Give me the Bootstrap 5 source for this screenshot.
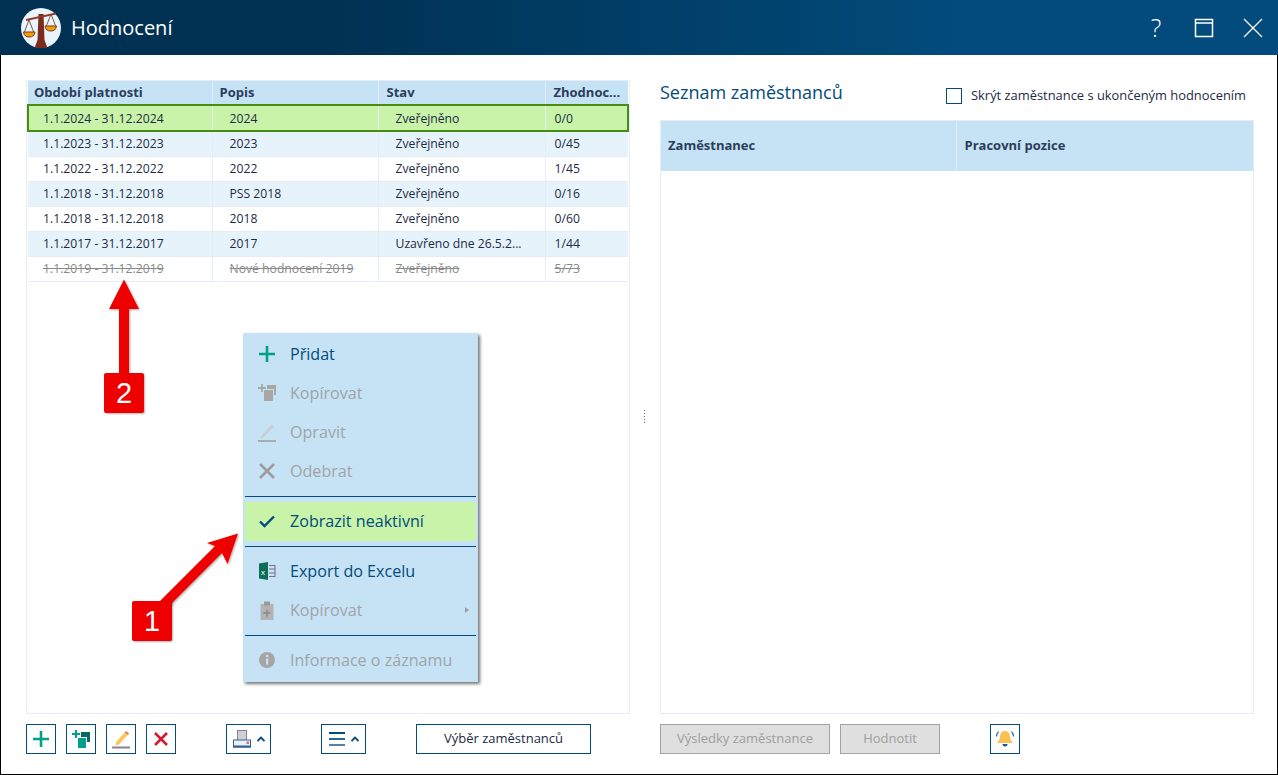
<!DOCTYPE html>
<html lang="cs">
<head>
<meta charset="utf-8">
<title>Hodnocení</title>
<link href="https://cdn.jsdelivr.net/npm/bootstrap@5.3.0/dist/css/bootstrap.min.css" rel="stylesheet">
<style>
html,body{margin:0;height:775px;overflow:hidden;background:#fff}
body{font-family:"Open Sans","Liberation Sans",sans-serif;font-size:12px;color:#1d2b45}
.appwin{width:1278px;height:775px;position:relative;border-bottom:1px solid #000}
.titlebar{height:55px;background:linear-gradient(90deg,#003152 0%,#003152 25%,#024b7c 75%,#024b7c 100%);color:#fff}
.titlebar .apptitle{font-size:20px;margin-left:10px;line-height:55px}
.logo{margin-left:21px;display:block}
.winbtns{margin-right:15px;gap:28px}
.helpmark{font-size:25px;line-height:1;width:20px;text-align:center;font-weight:300}
.sqgap{margin-right:1px}
.mainarea{height:719px;border-left:1px solid #000;border-right:1px solid #000;padding:25px 23px 0 25px}
.leftpane{width:604px}
.gutter{width:30px;position:relative}
.rightpane{width:594px}
.gripdots{position:absolute;left:14px;top:330px;width:1px;height:15px;background:repeating-linear-gradient(#667 0 1px,transparent 1px 3px)}
.gridbox{border:1px solid #e6ecf7;height:634px;background:#fff}
.rightpane .gridbox{height:594px}
.gridtbl{width:100%;table-layout:fixed;margin:0;border-collapse:collapse;font-size:12.2px}
.gridtbl th{background:#c6e3f5;color:#2c3d5c;font-size:13px;font-weight:700;height:24px;padding:0 0 0 6px;border:0;border-right:1px solid #e6ecf7;line-height:1;vertical-align:middle;white-space:nowrap;overflow:hidden;text-overflow:ellipsis}
.gridtbl th:nth-child(2){padding-left:7px}
.gridtbl th:nth-child(n+3){padding-left:8px}
.gridtbl th:last-child{border-right:0}
.gridtbl td{height:25px;padding:1px 0 0 17px;border:0;border-right:1px solid #e6ecf7;border-bottom:1px solid #e6ecf7;color:#1d2b45;background:#fff;vertical-align:middle;line-height:1;white-space:nowrap;overflow:hidden;text-overflow:ellipsis}
.gridtbl td:first-child{padding-left:15px}
.gridtbl td:last-child{border-right:0;padding-left:9px}
.gridtbl tr.altrow td{background:#e6f3fb}
.gridtbl tr.selrow td{background:#c8f3a8;height:26px;padding-top:2px;border-top:2px solid #478c12;border-bottom:2px solid #478c12;border-right:1px solid #e6ecf7}
.gridtbl tr.selrow td:first-child{border-left:2px solid #478c12;padding-left:14px}
.gridtbl tr.selrow td:last-child{border-right:2px solid #478c12}
.gridtbl tr.offrow td{color:#8a8a8a;text-decoration:line-through}
.gridtbl.emptab th{height:50px;padding:0 0 1px 7px}
.gridtbl.emptab th:nth-child(2){padding-left:8px}
.toolrow{margin-top:10px;height:30px}
.tbtn{height:30px;width:30px;padding:0;border:1px solid #024b7c;border-radius:0;background:#fff;display:flex;align-items:center;justify-content:center;font-size:13px;color:#1d2b45;flex:none}
.tbtn.wide{width:45px;gap:5px}
.tbtn.textbtn{width:175px}
.tbtn.offbtn{background:#dfdfdf;border-color:#a3a3a3;color:#9e9e9e}
.nextbtn{margin-left:10px}
.farbtn{margin-left:50px}
.seznam{font-size:18px;color:#024b7c;line-height:24px;margin:0}
.righthead{height:40px;padding-top:0}
.chkwrap{font-size:12.9px;color:#1d2b45;gap:9px;margin-right:8px;margin-top:6px}
.chkbox{width:16px;height:16px;border:1px solid #024b7c;display:block;background:#fff}
.ctxmenu{position:absolute;left:243px;top:333px;width:235px;height:349px;padding:2px;margin:0;background:#c6e3f5;border:0;border-radius:0;box-shadow:2px 2px 3px rgba(0,0,0,.55);display:block;font-size:16.1px;z-index:5}
.ctxmenu .dropdown-item{height:39px;padding:0 0 1px 45px;color:#024b7c;display:flex;align-items:center;position:relative;line-height:1;background:transparent}
.ctxmenu .dropdown-item.disabled{color:#a0a4a8}
.ctxmenu .dropdown-item.onitem{background:#c8f3a8;margin-top:0}
.ctxmenu hr.dropdown-divider{margin:5px 0 5px 0;border-top:1px solid #024b7c;opacity:1;height:0}
.ctxmenu .mico{position:absolute;left:11px;top:8px;width:22px;height:22px}
.subcaret{position:absolute;right:7px;top:16px;width:0;height:0;border-left:4px solid #9a9ea2;border-top:3.5px solid transparent;border-bottom:3.5px solid transparent}
.annot{position:absolute;left:0;top:0;z-index:6;pointer-events:none}
.numtag{position:absolute;width:40px;height:40px;background:#ef0000;border-radius:2px;color:#fff;font-size:29px;line-height:40px;text-align:center;z-index:7;box-shadow:1px 1px 2px rgba(0,0,0,.3);font-family:"Liberation Sans",sans-serif}
.tag-a{left:132px;top:601px}
.tag-b{left:104px;top:373px}
</style>
</head>
<body>
<div class="appwin">
  <div class="titlebar d-flex align-items-center">
    <svg class="logo" width="40" height="40" viewBox="0 0 40 40">
      <circle cx="20" cy="20" r="20" fill="#e9f4fb"/>
      <path d="M17.5 6h5l1 26 3 8h-13l3-8z" fill="#7b2c1e"/>
      <path d="M5 11 L35 4.5 L35 6.5 L5 13z" fill="#8f3a2a"/>
      <path d="M8 12 L3 25 M8 12 L13 25 M30 6 L25 19 M30 6 L35 19" stroke="#7b4a30" stroke-width=".9" fill="none"/>
      <path d="M2.500 24h11.500a5.800 5.800 0 0 1-11.500 0z" fill="#f39a06" stroke="#7b3a20"/>
      <path d="M24 18h11.500a5.800 5.800 0 0 1-11.500 0z" fill="#f39a06" stroke="#7b3a20"/>
    </svg>
    <span class="apptitle">Hodnocení</span>
    <div class="winbtns ms-auto d-flex align-items-center">
      <span class="helpmark">?</span>
      <svg class="sqgap" width="20" height="20" viewBox="0 0 20 20" fill="none" stroke="#fff" stroke-width="1.500"><rect x="1.500" y="1.500" width="17" height="17"/><path d="M1.500 5h17"/></svg>
      <svg width="20" height="20" viewBox="0 0 20 20" fill="none" stroke="#fff" stroke-width="1.200"><path d="M1 1l18 18M19 1L1 19"/></svg>
    </div>
  </div>
  <div class="mainarea d-flex">
    <div class="leftpane">
      <div class="gridbox">
        <table class="table gridtbl">
          <colgroup><col style="width:184px"><col style="width:166px"><col style="width:167px"><col></colgroup>
          <thead><tr><th>Období platnosti</th><th>Popis</th><th>Stav</th><th>Zhodnoc...</th></tr></thead>
          <tbody>
            <tr class="selrow"><td>1.1.2024 - 31.12.2024</td><td>2024</td><td>Zveřejněno</td><td>0/0</td></tr>
            <tr class="altrow"><td>1.1.2023 - 31.12.2023</td><td>2023</td><td>Zveřejněno</td><td>0/45</td></tr>
            <tr><td>1.1.2022 - 31.12.2022</td><td>2022</td><td>Zveřejněno</td><td>1/45</td></tr>
            <tr class="altrow"><td>1.1.2018 - 31.12.2018</td><td>PSS 2018</td><td>Zveřejněno</td><td>0/16</td></tr>
            <tr><td>1.1.2018 - 31.12.2018</td><td>2018</td><td>Zveřejněno</td><td>0/60</td></tr>
            <tr class="altrow"><td>1.1.2017 - 31.12.2017</td><td>2017</td><td>Uzavřeno dne 26.5.2...</td><td>1/44</td></tr>
            <tr class="offrow"><td>1.1.2019 - 31.12.2019</td><td>Nové hodnocení 2019</td><td>Zveřejněno</td><td>5/73</td></tr>
          </tbody>
        </table>
      </div>
      <div class="toolrow d-flex">
        <button class="tbtn" type="button" aria-label="Přidat"><svg width="18" height="18" viewBox="0 0 18 18"><path d="M9 1v16M1 9h16" stroke="#00a08a" stroke-width="2.600"/></svg></button>
        <button class="tbtn nextbtn" type="button" aria-label="Kopírovat"><svg width="20" height="20" viewBox="0 0 20 20"><rect x="10" y="3" width="9" height="10" fill="#05695e"/><rect x="6.500" y="8.500" width="9" height="11" fill="#00a08a" stroke="#fff"/><path d="M5 1v8M1 5h8" stroke="#00a08a" stroke-width="2"/></svg></button>
        <button class="tbtn nextbtn" type="button" aria-label="Opravit"><svg width="20" height="20" viewBox="0 0 20 20"><path d="M5 13L14.500 2.500l3 2.500L8 15.500l-3.200 1z" fill="#f8c860"/><path d="M15 2l3 2.500-1 1.200-3-2.500z" fill="#e06a6a"/><path d="M1 18.500h18" stroke="#8b7f94" stroke-width="2"/></svg></button>
        <button class="tbtn nextbtn" type="button" aria-label="Odebrat"><svg width="18" height="18" viewBox="0 0 18 18"><path d="M3 3l12 12M15 3L3 15" stroke="#cf1f2f" stroke-width="2.600"/></svg></button>
        <button class="tbtn wide farbtn" type="button" aria-label="Tisk"><svg width="20" height="20" viewBox="0 0 20 20"><rect x="5.500" y="1.500" width="9" height="10" fill="#cfcfd8" stroke="#8b7f94"/><rect x="1.500" y="11" width="17" height="7" fill="#e9f1f8" stroke="#2f6293"/><path d="M1 17.500h18" stroke="#2f6293" stroke-width="2"/><rect x="14.500" y="12.500" width="2.500" height="2.500" fill="#e06a7a"/></svg><svg width="8" height="6" viewBox="0 0 8 6"><path d="M.5 5L4 1.500 7.500 5" fill="none" stroke="#024b7c" stroke-width="1.800"/></svg></button>
        <button class="tbtn wide farbtn" type="button" aria-label="Menu"><svg width="17" height="14" viewBox="0 0 17 14"><path d="M0 1h16" stroke="#024b7c" stroke-width="2"/><path d="M0 7h16" stroke="#24689a" stroke-width="2"/><path d="M0 13h16" stroke="#4f84a8" stroke-width="2"/></svg><svg width="8" height="6" viewBox="0 0 8 6"><path d="M.5 5L4 1.500 7.500 5" fill="none" stroke="#024b7c" stroke-width="1.800"/></svg></button>
        <button class="tbtn textbtn farbtn" type="button">Výběr zaměstnanců</button>
      </div>
    </div>
    <div class="gutter"><span class="gripdots"></span></div>
    <div class="rightpane">
      <div class="righthead d-flex justify-content-between align-items-start">
        <h2 class="seznam fw-normal">Seznam zaměstnanců</h2>
        <label class="chkwrap d-flex align-items-center"><span class="chkbox"></span>Skrýt zaměstnance s ukončeným hodnocením</label>
      </div>
      <div class="gridbox">
        <table class="table gridtbl emptab">
          <colgroup><col style="width:295px"><col></colgroup>
          <thead><tr><th>Zaměstnanec</th><th>Pracovní pozice</th></tr></thead>
        </table>
      </div>
      <div class="toolrow d-flex">
        <button class="tbtn offbtn" style="width:170px" type="button">Výsledky zaměstnance</button>
        <button class="tbtn offbtn nextbtn" style="width:100px" type="button">Hodnotit</button>
        <button class="tbtn farbtn" type="button" aria-label="Upozornění"><svg width="20" height="20" viewBox="0 0 20 20"><path d="M10 2c3.800 0 4.800 3 5 6 .2 2.700 1.500 4.200 3 6H2c1.500-1.800 2.800-3.300 3-6 .2-3 1.200-6 5-6z" fill="#fbc04f"/><path d="M7.500 15h5a2.500 2.500 0 0 1-5 0z" fill="#1c5a86"/><path d="M1.500 7.500c0-2 .8-3.500 2-4.800M18.500 7.500c0-2-.8-3.500-2-4.800" stroke="#24689a" stroke-width="1.200" fill="none"/></svg></button>
      </div>
    </div>
  </div>

  <ul class="dropdown-menu ctxmenu list-unstyled">
    <li><a class="dropdown-item" href="#"><svg class="mico" viewBox="0 0 22 22"><path d="M11 3v16M3 11h16" stroke="#00a08a" stroke-width="2.600"/></svg>Přidat</a></li>
    <li><a class="dropdown-item disabled" href="#"><svg class="mico" viewBox="0 0 22 22"><rect x="11" y="3" width="9" height="10" fill="#a6a6a6"/><rect x="7.500" y="7.500" width="10" height="12" fill="#a6a6a6" stroke="#c6e3f5"/><path d="M6 2v8M2 6h8" stroke="#a6a6a6" stroke-width="1.800"/></svg>Kopírovat</a></li>
    <li><a class="dropdown-item disabled" href="#"><svg class="mico" viewBox="0 0 22 22"><path d="M5 15L16 3.500l2 2L7 17l-2.500.6z" fill="#c9cdd0"/><path d="M2 20h18" stroke="#a6a6a6" stroke-width="1.800"/></svg>Opravit</a></li>
    <li><a class="dropdown-item disabled" href="#"><svg class="mico" viewBox="0 0 22 22"><path d="M4 4l14 14M18 4L4 18" stroke="#9c9c9c" stroke-width="2.600"/></svg>Odebrat</a></li>
    <li><hr class="dropdown-divider"></li>
    <li><a class="dropdown-item onitem" href="#"><svg class="mico" viewBox="0 0 22 22"><path d="M4 11.500l4.500 4.500L18 6.500" fill="none" stroke="#024b7c" stroke-width="2.400"/></svg>Zobrazit neaktivní</a></li>
    <li><hr class="dropdown-divider"></li>
    <li><a class="dropdown-item" href="#"><svg class="mico" viewBox="0 0 22 22"><path d="M3 3.500L12 2v18l-9-1.500z" fill="#0d6e57"/><text x="5" y="14.500" font-size="8" fill="#fff" font-family="Liberation Sans">x</text><path d="M13 5.500h6v11h-6M13 9h6M13 13h6" fill="none" stroke="#7f6f88" stroke-width="1.100"/></svg>Export do Excelu</a></li>
    <li><a class="dropdown-item disabled" href="#"><svg class="mico" viewBox="0 0 22 22"><rect x="4.500" y="5" width="13" height="16" fill="#b3b3b3"/><rect x="8" y="2.500" width="6" height="4" fill="#999"/><path d="M11 10.500v7M7.500 14h7" stroke="#8a8a8a" stroke-width="1.600"/></svg>Kopírovat<span class="subcaret"></span></a></li>
    <li><hr class="dropdown-divider"></li>
    <li><a class="dropdown-item disabled" href="#"><svg class="mico" viewBox="0 0 22 22"><circle cx="11" cy="11" r="8" fill="#a6a6a6"/><rect x="10" y="9.500" width="2.200" height="6" fill="#c6e3f5"/><rect x="10" y="6" width="2.200" height="2.200" fill="#c6e3f5"/></svg>Informace o záznamu</a></li>
  </ul>

  <svg class="annot" width="1278" height="775" viewBox="0 0 1278 775">
    <defs><filter id="shd" x="-20%" y="-20%" width="140%" height="140%"><feDropShadow dx="1" dy="1" stdDeviation="1.200" flood-opacity=".35"/></filter></defs>
    <path filter="url(#shd)" d="M124 279.500L139 309H129V380H119V309H109z" fill="#ef0000"/>
    <path filter="url(#shd)" d="M238 533.500L227.500 564 222 553 165 610 158 603 215 546 207 543z" fill="#ef0000"/>
  </svg>
  <div class="numtag tag-a">1</div>
  <div class="numtag tag-b">2</div>
</div>
<script src="https://cdn.jsdelivr.net/npm/bootstrap@5.3.0/dist/js/bootstrap.bundle.min.js"></script>
</body>
</html>
